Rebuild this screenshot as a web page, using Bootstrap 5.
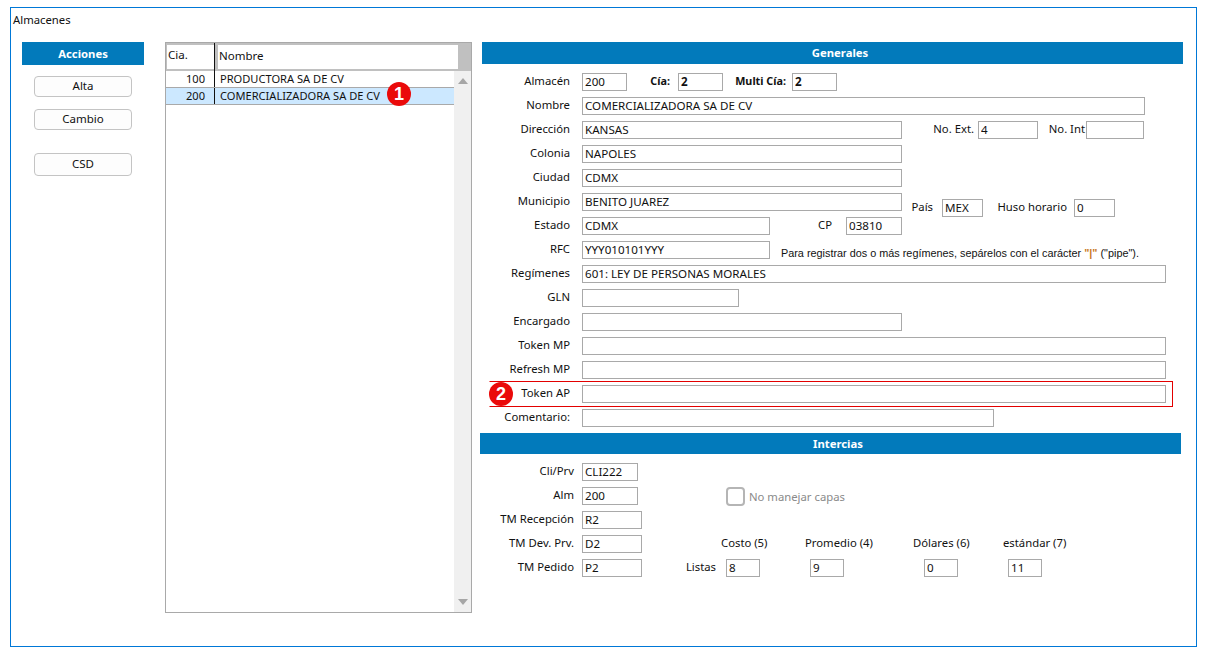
<!DOCTYPE html>
<html lang="es">
<head>
  <meta charset="UTF-8">
  <meta name="viewport" content="width=device-width, initial-scale=1.0">
  <title>Almacenes</title>
  <link href="https://cdn.jsdelivr.net/npm/bootstrap@5.3.0/dist/css/bootstrap.min.css" rel="stylesheet">
  <style>
    body { font-family: "Noto Sans", "Open Sans", sans-serif; font-size: 11.3px; color: #111; background: #fff; }
    .marco { margin: 7px 0 0 10px; width: 1187px; height: 640px; border: 1px solid #0078d7; position: relative; }
    .titulo { height: 34px; padding: 4px 0 0 2px; line-height: 16px; }
    .barra { background: #027abb; color: #fff; font-weight: 700; text-align: center; }
    .col-acciones { width: 122px; margin-left: 11px; }
    .col-acciones .barra { height: 23px; line-height: 23px; margin-bottom: 11px; }
    .boton { display: block; width: 98px; height: 21px; margin: 0 0 12px 12px; padding: 0 0 2px; font-size: 11.5px; line-height: 16px; color: #111; background: #fdfdfd; border: 1px solid #c4c4c4; border-radius: 4px; }
    .boton-csd { height: 23px; margin-top: 23px; }

    .lista { width: 307px; height: 571px; margin-left: 21px; border: 1px solid #a9a9a9; position: relative; }
    .lista-cab { height: 28px; background: #c0c0c0; padding: 2px 13px 2px 1px; }
    .cab-cia { width: 47px; height: 24px; background: #fff; line-height: 20px; padding-left: 1px; font-size: 11.6px; }
    .cab-nom { flex: 1; height: 24px; margin-left: 3px; background: #fff; line-height: 22px; padding-left: 0; border-left: 1px solid #fff; font-size: 11.5px; }
    .sep { width: 1px; height: 28px; margin-top: -2px; background: #111; }
    .lista-fila { height: 16px; line-height: 15px; width: 289px; font-size: 11.1px; }
    .lista-fila .num { width: 49px; padding-right: 9px; text-align: right; border-right: 1px solid #111; }
    .lista-fila .nom { padding-left: 5px; }
    .lista-fila.activa { background: #cce8ff; border-top: 1px solid #a9a9a9; border-bottom: 1px solid #a9a9a9; height: 18px; }
    .scroll { position: absolute; top: 28px; right: 0; bottom: 0; width: 17px; background: #f0f0f0; display: flex; flex-direction: column; justify-content: space-between; align-items: center; padding: 7px 0; }
    .flecha-arr { width: 0; height: 0; border: 5px solid transparent; border-top: 0; border-bottom: 6px solid #a6a6a6; }
    .flecha-aba { width: 0; height: 0; border: 5px solid transparent; border-bottom: 0; border-top: 6px solid #a6a6a6; }
    .punto { position: absolute; width: 24px; height: 24px; border-radius: 50%; background: #ea0a0a; color: #fff; font-family: "Liberation Sans", sans-serif; font-weight: 700; font-size: 18px; line-height: 24px; text-align: center; }
    .punto-1 { left: 221px; top: 39px; }
    .punto-2 { left: 7px; top: -3px; }

    .col-datos { width: 701px; margin-left: 10px; }
    .barra-gen { height: 22px; line-height: 21px; padding-left: 15px; margin-bottom: 9px; }
    .barra-int { height: 21px; line-height: 21px; padding-left: 15px; margin: 0 2px 9px -2px; }
    .renglon { display: flex; align-items: flex-start; height: 18px; margin-bottom: 6px; position: relative; }
    .etq { line-height: 16px; white-space: nowrap; text-align: right; flex: none; }
    .etq-a { width: 88px; margin-right: 12px; }
    .etq-b { width: 92px; margin-right: 8px; }
    .campo { flex: none; height: 18px; padding: 0 2px 2px; font-size: 11.6px; line-height: 14px; color: #111; border: 1px solid #a9a9a9; border-radius: 0; background: #fff; font-family: inherit; }
    .campo:focus { box-shadow: none; border-color: #a9a9a9; }
    .fuerte { font-weight: 700; }
    .etq.fuerte { font-size: 10.8px; }
    .w34 { width: 34px; } .w41 { width: 41px; } .w45 { width: 45px; } .w56 { width: 56px; } .w58 { width: 58px; } .w60 { width: 60px; }
    .w157 { width: 157px; } .w188 { width: 188px; } .w320 { width: 320px; } .w412 { width: 412px; } .w563 { width: 563px; } .w584 { width: 584px; }
    .abajo { margin-top: 6px; }
    .nota { margin: 5px 0 0 11px; font-family: "Liberation Sans", sans-serif; font-size: 10.85px; line-height: 14px; white-space: nowrap; }
    .nota b { color: #c97a1e; font-weight: 700; }
    .recuadro { position: absolute; left: 7px; right: 10px; top: -4px; height: 26px; border: 1px solid #e30000; border-left-color: transparent; }
    .casilla.form-check-input { width: 19px; height: 19px; margin: 0 4px 0 88px; border: 2px solid #b5b5b5; border-radius: 4px; opacity: 1; float: none; }
    .gris { color: #8a8a8a; margin-top: 2px; line-height: 16px; }
    .tit-costo { width: 84px; margin-left: 79px; }
    .tit-prom { width: 108px; }
    .tit-dol { width: 90px; }
    .tit-col { line-height: 16px; white-space: nowrap; }
    .cia-e { width: 43px; margin-right: 8px; }
    .multi-e { width: 63px; margin-right: 6px; }
    .ext-e { width: 72px; margin-right: 4px; }
    .int-e { width: 47px; margin-right: 1px; }
    .pais-e { width: 31px; margin-right: 9px; }
    .huso-e { width: 84px; margin-right: 7px; }
    .cp-e { width: 62px; margin-right: 14px; }
    .listas-e { width: 74px; margin-right: 10px; }
    .sep-50 { margin-left: 50px; }
    .sep-80 { margin-left: 80px; }
  </style>
</head>
<body>
  <div class="marco">
    <div class="titulo">Almacenes</div>
    <div class="d-flex align-items-start">

      <div class="col-acciones">
        <div class="barra">Acciones</div>
        <button type="button" class="boton">Alta</button>
        <button type="button" class="boton">Cambio</button>
        <button type="button" class="boton boton-csd">CSD</button>
      </div>

      <div class="lista">
        <div class="lista-cab d-flex">
          <div class="cab-cia">Cia.</div>
          <div class="sep"></div>
          <div class="cab-nom">Nombre</div>
        </div>
        <div class="lista-fila d-flex"><div class="num">100</div><div class="nom">PRODUCTORA SA DE CV</div></div>
        <div class="lista-fila activa d-flex"><div class="num">200</div><div class="nom">COMERCIALIZADORA SA DE CV</div></div>
        <div class="scroll"><span class="flecha-arr"></span><span class="flecha-aba"></span></div>
        <span class="punto punto-1">1</span>
      </div>

      <div class="col-datos">
        <div class="barra barra-gen">Generales</div>

        <div class="renglon">
          <label class="etq etq-a">Almacén</label><input class="campo w45" value="200">
          <label class="etq fuerte cia-e">Cía:</label><input class="campo w45 fuerte" value="2">
          <label class="etq fuerte multi-e">Multi Cía:</label><input class="campo w45 fuerte" value="2">
        </div>
        <div class="renglon"><label class="etq etq-a">Nombre</label><input class="campo w563" value="COMERCIALIZADORA SA DE CV"></div>
        <div class="renglon">
          <label class="etq etq-a">Dirección</label><input class="campo w320" value="KANSAS">
          <label class="etq ext-e">No. Ext.</label><input class="campo w60" value="4">
          <label class="etq int-e">No. Int</label><input class="campo w58" value="">
        </div>
        <div class="renglon"><label class="etq etq-a">Colonia</label><input class="campo w320" value="NAPOLES"></div>
        <div class="renglon"><label class="etq etq-a">Ciudad</label><input class="campo w320" value="CDMX"></div>
        <div class="renglon">
          <label class="etq etq-a">Municipio</label><input class="campo w320" value="BENITO JUAREZ">
          <label class="etq abajo pais-e">País</label><input class="campo w41 abajo" value="MEX">
          <label class="etq abajo huso-e">Huso horario</label><input class="campo w41 abajo" value="0">
        </div>
        <div class="renglon">
          <label class="etq etq-a">Estado</label><input class="campo w188" value="CDMX">
          <label class="etq cp-e">CP</label><input class="campo w56" value="03810">
        </div>
        <div class="renglon">
          <label class="etq etq-a">RFC</label><input class="campo w188" value="YYY010101YYY">
          <span class="nota">Para registrar dos o más regímenes, sepárelos con el carácter <b>"|"</b> ("pipe").</span>
        </div>
        <div class="renglon"><label class="etq etq-a">Regímenes</label><input class="campo w584" value="601: LEY DE PERSONAS MORALES"></div>
        <div class="renglon"><label class="etq etq-a">GLN</label><input class="campo w157" value=""></div>
        <div class="renglon"><label class="etq etq-a">Encargado</label><input class="campo w320" value=""></div>
        <div class="renglon"><label class="etq etq-a">Token MP</label><input class="campo w584" value=""></div>
        <div class="renglon"><label class="etq etq-a">Refresh MP</label><input class="campo w584" value=""></div>
        <div class="renglon">
          <label class="etq etq-a">Token AP</label><input class="campo w584" value="">
          <span class="recuadro"></span>
          <span class="punto punto-2">2</span>
        </div>
        <div class="renglon"><label class="etq etq-a">Comentario:</label><input class="campo w412" value=""></div>

        <div class="barra barra-int">Intercias</div>

        <div class="renglon"><label class="etq etq-b">Cli/Prv</label><input class="campo w56" value="CLI222"></div>
        <div class="renglon">
          <label class="etq etq-b">Alm</label><input class="campo w56" value="200">
          <input type="checkbox" class="form-check-input casilla" disabled>
          <span class="gris">No manejar capas</span>
        </div>
        <div class="renglon"><label class="etq etq-b">TM Recepción</label><input class="campo w60" value="R2"></div>
        <div class="renglon">
          <label class="etq etq-b">TM Dev. Prv.</label><input class="campo w60" value="D2">
          <span class="tit-col tit-costo">Costo (5)</span>
          <span class="tit-col tit-prom">Promedio (4)</span>
          <span class="tit-col tit-dol">Dólares (6)</span>
          <span class="tit-col">estándar (7)</span>
        </div>
        <div class="renglon">
          <label class="etq etq-b">TM Pedido</label><input class="campo w60" value="P2">
          <label class="etq listas-e">Listas</label><input class="campo w34" value="8">
          <input class="campo w34 sep-50" value="9">
          <input class="campo w34 sep-80" value="0">
          <input class="campo w34 sep-50" value="11">
        </div>
      </div>
    </div>
  </div>
  <script src="https://cdn.jsdelivr.net/npm/bootstrap@5.3.0/dist/js/bootstrap.bundle.min.js"></script>
</body>
</html>
